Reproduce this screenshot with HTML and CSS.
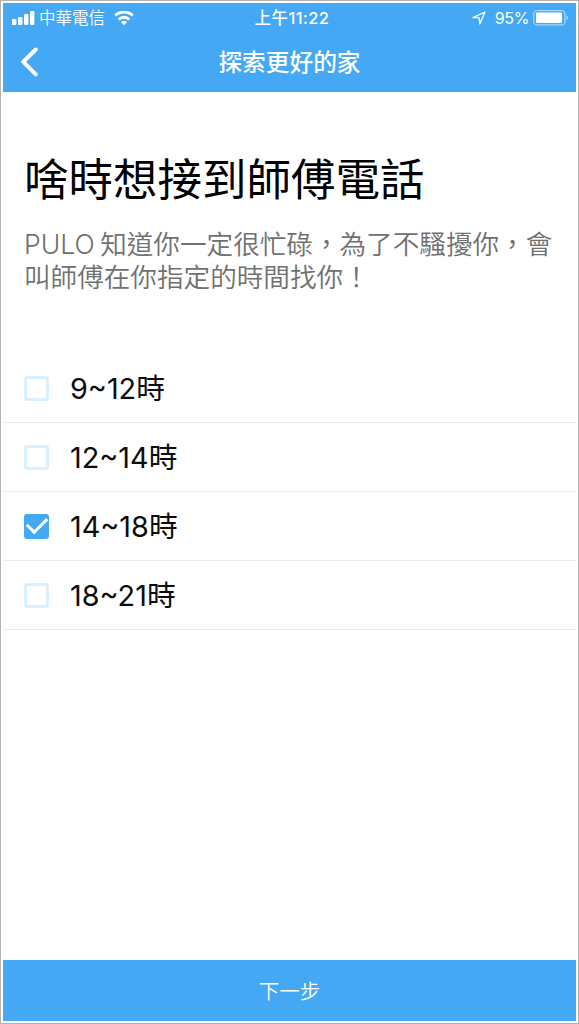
FILE: index.html
```html
<!DOCTYPE html>
<html lang="zh-Hant">
<head>
    <meta charset="UTF-8">
    <meta name="viewport" content="width=device-width, initial-scale=1.0">
    <title>探索更好的家</title>
    <link rel="stylesheet" href="styles.css">
</head>
<body>
<div class="screen">
    <header>
        <div class="status">
            <div class="status-left">
                <svg class="signal" width="23" height="16" viewBox="0 0 23 16" fill="#fff">
                    <rect x="0" y="9" width="4.4" height="6" rx="1.2"/>
                    <rect x="6" y="7" width="4.4" height="8" rx="1.2"/>
                    <rect x="12" y="4" width="4.4" height="11" rx="1.2"/>
                    <rect x="18" y="1" width="4.4" height="14" rx="1.2"/>
                </svg>
                <span class="carrier">中華電信</span>
                <svg class="wifi" width="20" height="15" viewBox="0 0 20 15" fill="none" stroke="#fff" stroke-width="2.8">
                    <path d="M1.2 4.6a12.6 12.6 0 0 1 17.6 0"/>
                    <path d="M4.6 8.4a7.8 7.8 0 0 1 10.8 0"/>
                    <path d="M7 11.2a4.4 4.4 0 0 1 6 0L10 14.3z" fill="#fff" stroke="none"/>
                </svg>
            </div>
            <span class="time">上午11:22</span>
            <div class="status-right">
                <svg class="location" width="14" height="14" viewBox="0 0 14 14" fill="none" stroke="#fff" stroke-width="1.3" stroke-linejoin="round">
                    <path d="M13 1L1 6.6l6.3.3.5 6.1z"/>
                </svg>
                <span class="percent">95%</span>
                <svg class="battery" width="36" height="16" viewBox="0 0 36 16">
                    <rect x=".7" y=".7" width="31.2" height="14.2" rx="3.5" fill="none" stroke="#a5d6fb" stroke-width="1.3"/>
                    <rect x="3" y="2.6" width="26" height="10.4" rx="1" fill="#fff"/>
                    <path d="M33.4 5.3q2 .5 2 2.5t-2 2.5z" fill="#a5d6fb"/>
                </svg>
            </div>
        </div>
        <nav>
            <svg class="back" width="18" height="30" viewBox="0 0 18 30" fill="none" stroke="#fff" stroke-width="4" stroke-linecap="round" stroke-linejoin="round">
                <path d="M15.8 2.5L3.3 14.8l12.5 12.5"/>
            </svg>
            <span class="nav-title">探索更好的家</span>
        </nav>
    </header>

    <main>
        <h1>啥時想接到師傅電話</h1>
        <p>PULO 知道你一定很忙碌，為了不騷擾你，會叫師傅在你指定的時間找你！</p>
        <form>
            <label><input type="checkbox" name="time"><span>9~12時</span></label>
            <label><input type="checkbox" name="time"><span>12~14時</span></label>
            <label><input type="checkbox" name="time" checked><span>14~18時</span></label>
            <label><input type="checkbox" name="time"><span>18~21時</span></label>
        </form>
    </main>

    <button type="button">下一步</button>
</div>
</body>
</html>
```

FILE: styles.css
```css
* {
    box-sizing: border-box;
}
body {
    margin: 0;
    font-family: Inter, "Noto Sans CJK TC", sans-serif;
    background-color: #fff;
}
.screen {
    display: flex;
    flex-direction: column;
    height: 1024px;
    padding: 2px;
    border: 1px solid #b4b4b4;
}
header {
    height: 89px;
    background-color: #44a8f4;
    color: #fff;
}
.status {
    display: grid;
    grid-template-columns: 1fr auto 1fr;
    align-items: center;
    height: 30px;
    padding: 0 7px 0 9px;
    font-size: 16.5px;
    line-height: 30px;
}
.status-left, .status-right {
    display: flex;
    align-items: center;
}
.status-right {
    justify-content: flex-end;
}
.carrier {
    margin: 0 9px 0 4px;
    font-weight: 350;
}
.time {
    padding-left: 3px;
    font-weight: 500;
    letter-spacing: 0.4px;
}
.percent {
    margin: 0 4px 0 9px;
    font-size: 16px;
    letter-spacing: -0.4px;
}
nav {
    display: grid;
    grid-template-columns: 1fr auto 1fr;
    align-items: center;
    height: 58px;
    padding: 0 17px;
}
.nav-title {
    grid-column: 2;
    margin-top: -3px;
    font-size: 23.7px;
    font-weight: 500;
}
main {
    flex: 1;
    padding-top: 57px;
}
h1 {
    margin: 0 21px;
    font-size: 44.5px;
    font-weight: 400;
    line-height: 62px;
}
p {
    margin: 17px 15px 0 21px;
    font-size: 26.6px;
    font-weight: 350;
    line-height: 33px;
    word-spacing: -2px;
    color: #707070;
}
form {
    margin-top: 60px;
}
label {
    display: flex;
    align-items: center;
    gap: 21px;
    height: 69px;
    padding-left: 21px;
    border-bottom: 1px solid #e9ebf0;
    font-size: 28.8px;
    font-weight: 400;
    line-height: 40px;
    color: #0c0c0c;
}
label span {
    margin-top: 1px;
}
input {
    appearance: none;
    display: grid;
    place-items: center;
    width: 25px;
    height: 25px;
    margin: 0;
    border: 3px solid #dbf0ff;
    border-radius: 3px;
}
input:checked {
    border-color: #44a8f4;
    background-color: #44a8f4;
}
input:checked::before {
    content: "";
    width: 17px;
    height: 9px;
    border: solid #fff;
    border-width: 0 0 3px 3px;
    transform: translateY(-3px) rotate(-45deg);
}
button {
    height: 61px;
    padding-bottom: 3px;
    border: none;
    background-color: #44a8f4;
    color: #fff;
    font-family: inherit;
    font-size: 20.5px;
    font-weight: 350;
}
```
